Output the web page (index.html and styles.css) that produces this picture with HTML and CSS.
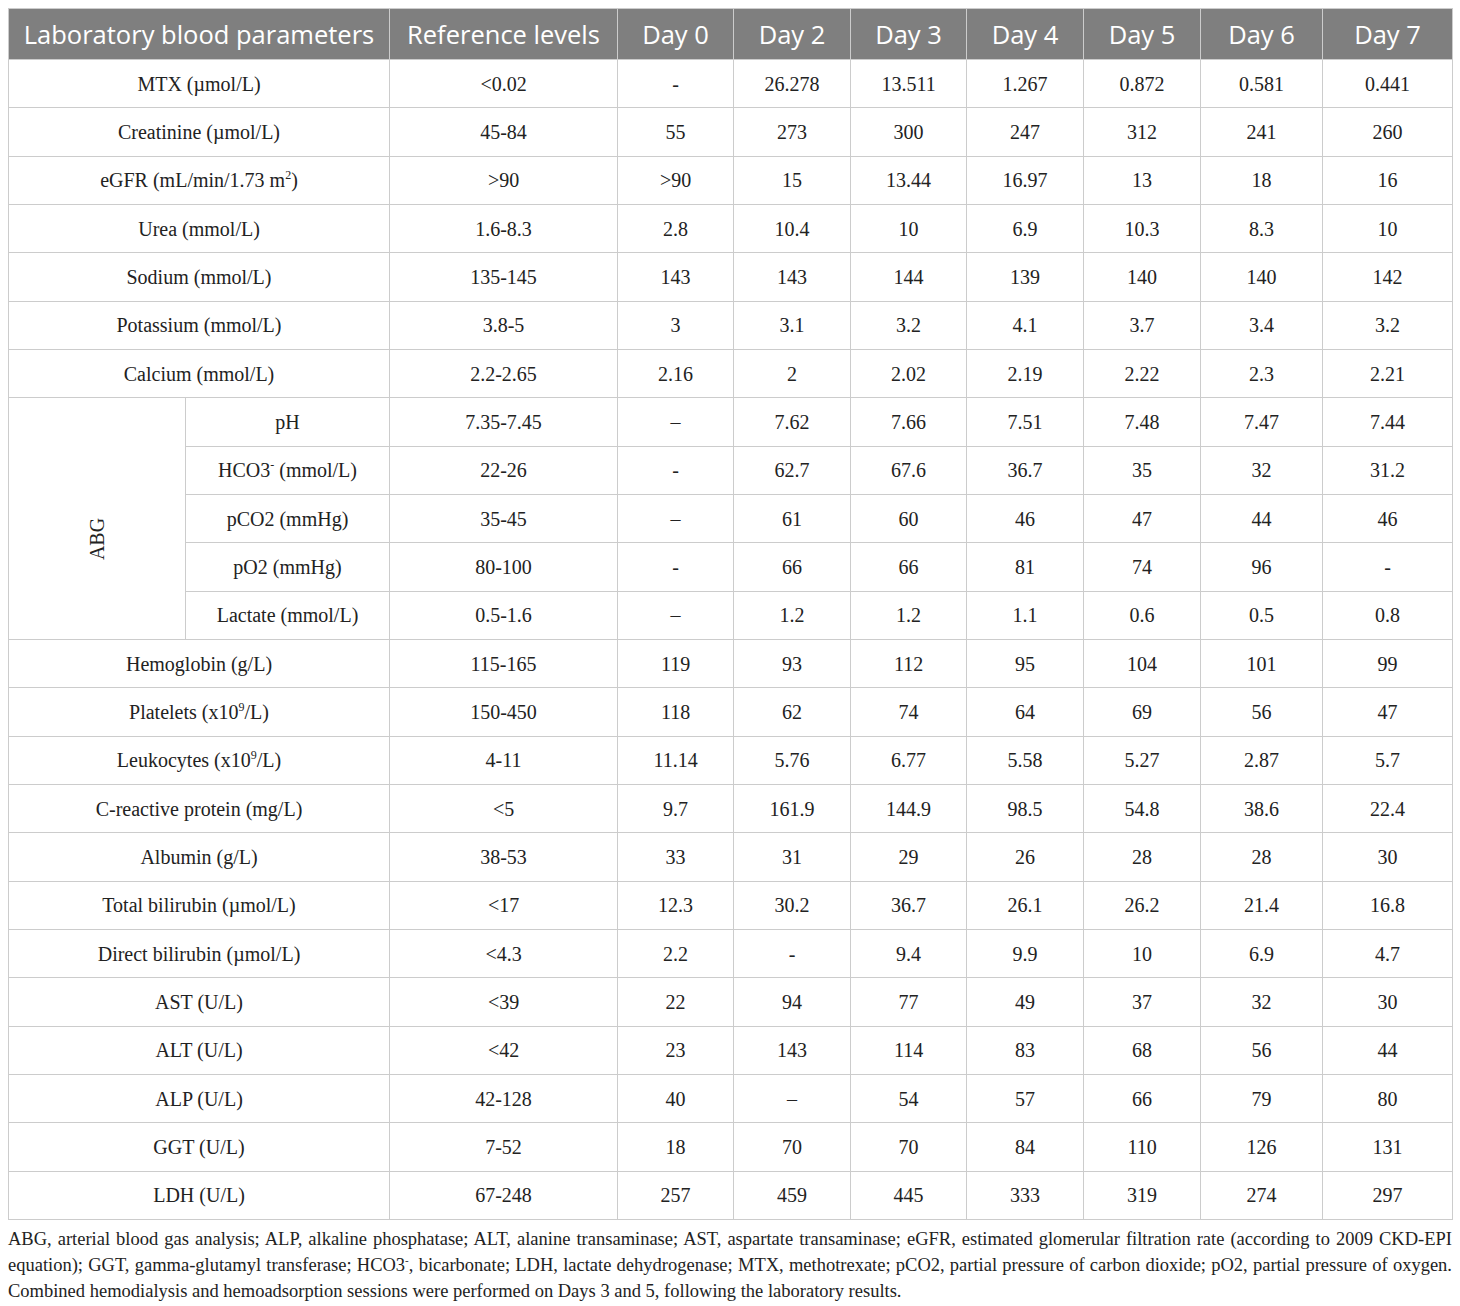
FILE: index.html
```html
<!DOCTYPE html>
<html>
<head>
<meta charset="utf-8">
<link rel="stylesheet" href="styles.css">
</head>
<body>
<table class="lab">
<colgroup>
<col class="c-a"><col class="c-b"><col class="c-ref"><col class="c-d0"><col class="c-d2"><col class="c-d3"><col class="c-d4"><col class="c-d5"><col class="c-d6"><col class="c-d7">
</colgroup>
<thead>
<tr><th colspan="2">Laboratory blood parameters</th><th>Reference levels</th><th>Day 0</th><th>Day 2</th><th>Day 3</th><th>Day 4</th><th>Day 5</th><th>Day 6</th><th>Day 7</th></tr>
</thead>
<tbody>
<tr><td colspan="2">MTX (µmol/L)</td><td>&lt;0.02</td><td>-</td><td>26.278</td><td>13.511</td><td>1.267</td><td>0.872</td><td>0.581</td><td>0.441</td></tr>
<tr><td colspan="2">Creatinine (µmol/L)</td><td>45-84</td><td>55</td><td>273</td><td>300</td><td>247</td><td>312</td><td>241</td><td>260</td></tr>
<tr><td colspan="2">eGFR (mL/min/1.73 m<sup>2</sup>)</td><td>&gt;90</td><td>&gt;90</td><td>15</td><td>13.44</td><td>16.97</td><td>13</td><td>18</td><td>16</td></tr>
<tr><td colspan="2">Urea (mmol/L)</td><td>1.6-8.3</td><td>2.8</td><td>10.4</td><td>10</td><td>6.9</td><td>10.3</td><td>8.3</td><td>10</td></tr>
<tr><td colspan="2">Sodium (mmol/L)</td><td>135-145</td><td>143</td><td>143</td><td>144</td><td>139</td><td>140</td><td>140</td><td>142</td></tr>
<tr><td colspan="2">Potassium (mmol/L)</td><td>3.8-5</td><td>3</td><td>3.1</td><td>3.2</td><td>4.1</td><td>3.7</td><td>3.4</td><td>3.2</td></tr>
<tr><td colspan="2">Calcium (mmol/L)</td><td>2.2-2.65</td><td>2.16</td><td>2</td><td>2.02</td><td>2.19</td><td>2.22</td><td>2.3</td><td>2.21</td></tr>
<tr><td rowspan="5" class="abg"><span class="vert">ABG</span></td><td>pH</td><td>7.35-7.45</td><td>–</td><td>7.62</td><td>7.66</td><td>7.51</td><td>7.48</td><td>7.47</td><td>7.44</td></tr>
<tr><td>HCO3<sup>-</sup> (mmol/L)</td><td>22-26</td><td>-</td><td>62.7</td><td>67.6</td><td>36.7</td><td>35</td><td>32</td><td>31.2</td></tr>
<tr><td>pCO2 (mmHg)</td><td>35-45</td><td>–</td><td>61</td><td>60</td><td>46</td><td>47</td><td>44</td><td>46</td></tr>
<tr><td>pO2 (mmHg)</td><td>80-100</td><td>-</td><td>66</td><td>66</td><td>81</td><td>74</td><td>96</td><td>-</td></tr>
<tr><td>Lactate (mmol/L)</td><td>0.5-1.6</td><td>–</td><td>1.2</td><td>1.2</td><td>1.1</td><td>0.6</td><td>0.5</td><td>0.8</td></tr>
<tr><td colspan="2">Hemoglobin (g/L)</td><td>115-165</td><td>119</td><td>93</td><td>112</td><td>95</td><td>104</td><td>101</td><td>99</td></tr>
<tr><td colspan="2">Platelets (x10<sup>9</sup>/L)</td><td>150-450</td><td>118</td><td>62</td><td>74</td><td>64</td><td>69</td><td>56</td><td>47</td></tr>
<tr><td colspan="2">Leukocytes (x10<sup>9</sup>/L)</td><td>4-11</td><td>11.14</td><td>5.76</td><td>6.77</td><td>5.58</td><td>5.27</td><td>2.87</td><td>5.7</td></tr>
<tr><td colspan="2">C-reactive protein (mg/L)</td><td>&lt;5</td><td>9.7</td><td>161.9</td><td>144.9</td><td>98.5</td><td>54.8</td><td>38.6</td><td>22.4</td></tr>
<tr><td colspan="2">Albumin (g/L)</td><td>38-53</td><td>33</td><td>31</td><td>29</td><td>26</td><td>28</td><td>28</td><td>30</td></tr>
<tr><td colspan="2">Total bilirubin (µmol/L)</td><td>&lt;17</td><td>12.3</td><td>30.2</td><td>36.7</td><td>26.1</td><td>26.2</td><td>21.4</td><td>16.8</td></tr>
<tr><td colspan="2">Direct bilirubin (µmol/L)</td><td>&lt;4.3</td><td>2.2</td><td>-</td><td>9.4</td><td>9.9</td><td>10</td><td>6.9</td><td>4.7</td></tr>
<tr><td colspan="2">AST (U/L)</td><td>&lt;39</td><td>22</td><td>94</td><td>77</td><td>49</td><td>37</td><td>32</td><td>30</td></tr>
<tr><td colspan="2">ALT (U/L)</td><td>&lt;42</td><td>23</td><td>143</td><td>114</td><td>83</td><td>68</td><td>56</td><td>44</td></tr>
<tr><td colspan="2">ALP (U/L)</td><td>42-128</td><td>40</td><td>–</td><td>54</td><td>57</td><td>66</td><td>79</td><td>80</td></tr>
<tr><td colspan="2">GGT (U/L)</td><td>7-52</td><td>18</td><td>70</td><td>70</td><td>84</td><td>110</td><td>126</td><td>131</td></tr>
<tr><td colspan="2">LDH (U/L)</td><td>67-248</td><td>257</td><td>459</td><td>445</td><td>333</td><td>319</td><td>274</td><td>297</td></tr>
</tbody>
</table>
<p class="note">ABG, arterial blood gas analysis; ALP, alkaline phosphatase; ALT, alanine transaminase; AST, aspartate transaminase; eGFR, estimated glomerular filtration rate (according to 2009 <span class="nw">CKD-EPI</span> equation); GGT, gamma-glutamyl transferase; HCO3<sup>-</sup>, bicarbonate; LDH, lactate dehydrogenase; MTX, methotrexate; pCO2, partial pressure of carbon dioxide; pO2, partial pressure of oxygen. Combined hemodialysis and hemoadsorption sessions were performed on Days 3 and 5, following the laboratory results.</p>
</body>
</html>
```

FILE: styles.css
```css
html, body {
  margin: 0;
  padding: 0;
  background: #ffffff;
}
body {
  padding: 8px 8px 0 8px;
  font-family: "Liberation Serif", "Times New Roman", serif;
  color: #222222;
}
.lab {
  width: 1444px;
  border-collapse: collapse;
  table-layout: fixed;
}
.c-a { width: 177px; }
.c-b { width: 204px; }
.c-ref { width: 228px; }
.c-d0 { width: 116px; }
.c-d2 { width: 117px; }
.c-d3 { width: 116px; }
.c-d4 { width: 117px; }
.c-d5 { width: 117px; }
.c-d6 { width: 122px; }
.c-d7 { width: 130px; }
.lab th {
  background: #7f7f7f;
  color: #ffffff;
  font-family: "Open Sans", "Noto Sans", sans-serif;
  font-weight: 400;
  font-size: 25.5px;
  height: 50px;
  padding: 0;
  border: 1px solid #cccccc;
  text-align: center;
  white-space: nowrap;
}
.lab td {
  height: 47.33px;
  padding: 0;
  border: 1px solid #cccccc;
  text-align: center;
  font-size: 20px;
  line-height: 22px;
}
.lab sup {
  font-size: 12px;
  line-height: 0;
  vertical-align: 8px;
}
.lab td.abg {
  padding-top: 40px;
}
.vert {
  display: inline-block;
  transform: rotate(-90deg);
}
.note {
  margin: 6px 0 0 0;
  font-size: 18.5px;
  line-height: 26px;
  color: #222222;
  width: 1444px;
  text-align: justify;
}
.nw { white-space: nowrap; }
.note sup {
  font-size: 11px;
  line-height: 0;
  vertical-align: 7px;
}
```
